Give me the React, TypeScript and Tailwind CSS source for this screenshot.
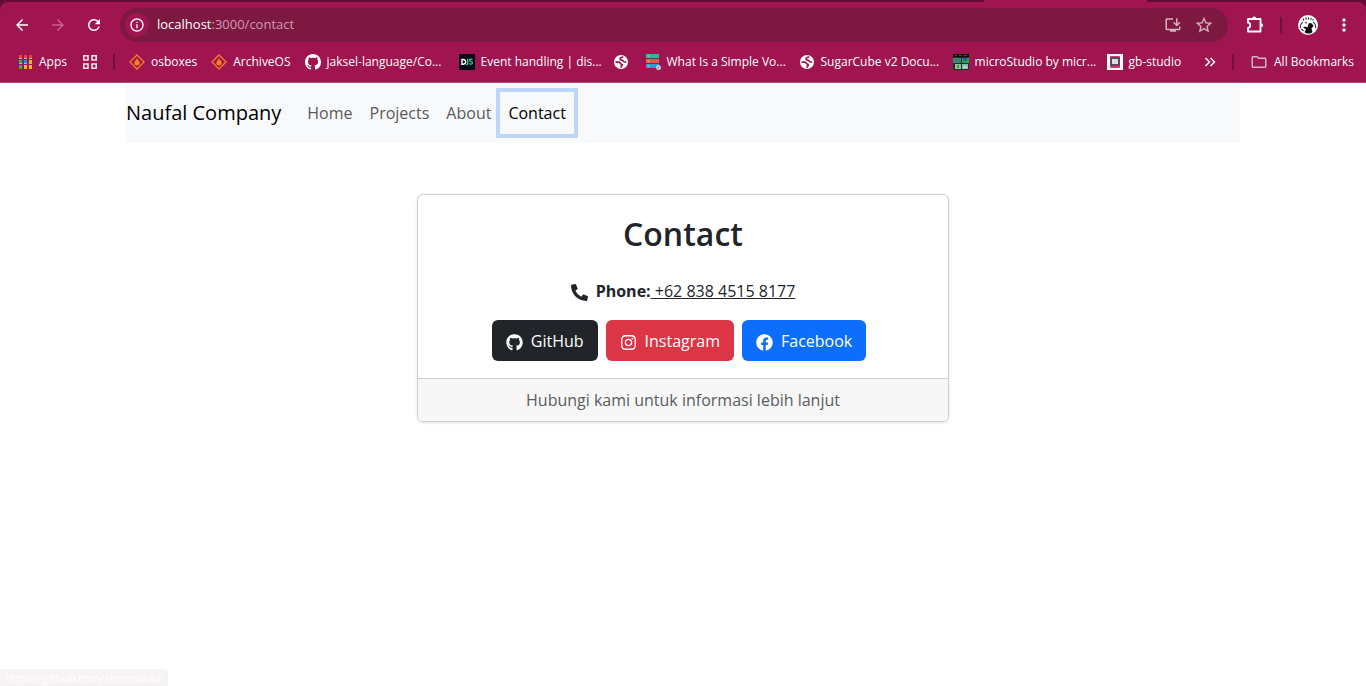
import type { ReactNode } from "react";
import { FaFacebook, FaGithub, FaInstagram, FaPhoneAlt } from "react-icons/fa";
import {
  MdArrowBack,
  MdArrowForward,
  MdInfoOutline,
  MdInstallDesktop,
  MdMoreVert,
  MdOutlineFolder,
  MdRefresh,
  MdStarBorder,
} from "react-icons/md";
import { BsGithub } from "react-icons/bs";

const appColors = [
  "#ea4335", "#ea4335", "#ea4335",
  "#34a853", "#1a8cff", "#fbbc04",
  "#34a853", "#fbbc04", "#fbbc04",
];

function AppsIcon() {
  return (
    <svg width="14" height="14" viewBox="0 0 14 14" aria-hidden="true">
      {appColors.map((c, i) => (
        <rect key={i} x={(i % 3) * 5} y={Math.floor(i / 3) * 5} width="3" height="4" fill={c} />
      ))}
      <path d="M0 3.500h3M5 3.500h3M10 3.500h3M0 8.500h3M5 8.500h3M10 8.500h3" stroke="#d9a3bc" />
    </svg>
  );
}

function GridIcon() {
  return (
    <svg width="14" height="14" viewBox="0 0 14 14" fill="none" stroke="#f6e3ec" strokeWidth="1.6" aria-hidden="true">
      <path d="M.8.8H5v4.200H.8zM9 .8h4.200V5H9zM.8 9H5v4.200H.8zM9 9h4.200v4.200H9z" />
    </svg>
  );
}

function DiamondIcon() {
  return (
    <svg width="16" height="16" viewBox="0 0 16 16" aria-hidden="true">
      <path d="M8 1 15 8 8 15 1 8z" fill="none" stroke="#f58220" strokeWidth="1.3" />
      <path d="M8 4c.3 1.700 2.700 2.600 2.700 4.800A2.700 2.700 0 0 1 8 11.500a2.700 2.700 0 0 1-2.700-2.700C5.300 7.300 7.600 6 8 4z" fill="#f58220" />
    </svg>
  );
}

function GlobeIcon() {
  return (
    <svg width="16" height="16" viewBox="0 0 16 16" aria-hidden="true">
      <circle cx="8" cy="8" r="7" fill="#fff" />
      <path d="M2.500 8.200h3.300c1.600 0 1.300 2.100 3 2.100.7 0 .6 1.700-.6 1.700v1.800" fill="none" stroke="#a0144f" strokeWidth="1.700" />
      <path d="M10.300 3.200C8.800 3 7 3.800 7 5c0 1.700 2.800.7 3.300 2.200.3.900 1.200.9 3 .9" fill="none" stroke="#a0144f" strokeWidth="1.700" />
    </svg>
  );
}

function DiscordJsIcon() {
  return (
    <svg width="16" height="16" viewBox="0 0 16 16" aria-hidden="true">
      <path d="M0 0h16v16H0z" fill="#090a16" />
      <path d="M3 5.500h1.300a2.200 2.200 0 0 1 0 4.700H3z" fill="none" stroke="#fff" strokeWidth="1.400" />
      <path d="M8.700 4.800v4.500c0 1-.8 1.400-1.900 1.200M13.500 5.600c-1-.7-3-.5-3 .8s3 .9 3 2.400-2.200 1.700-3.300.8" fill="none" stroke="#3fc58a" strokeWidth="1.300" />
    </svg>
  );
}

function ServerIcon() {
  return (
    <svg width="16" height="16" viewBox="0 0 16 16" aria-hidden="true">
      <path d="M1 0h13v4H1z" fill="#27b99a" />
      <path d="M2 4h11v1H2zM2 9h11v1H2z" fill="#34495e" />
      <path d="M1 5h13v4H1z" fill="#e2574c" />
      <path d="M1 10h13v4H1z" fill="#2d9cdb" />
      <path d="M2.500 1.500h2v1h-2zM2.500 6.500h2v1h-2zM2.500 11.500h2v1h-2z" fill="#f7d154" />
      <circle cx="13.500" cy="13.500" r="2.500" fill="#c9ced3" />
      <path d="m12.300 13.500 1 1 1.500-2" fill="none" stroke="#6b7680" strokeWidth=".8" />
    </svg>
  );
}

function MicroStudioIcon() {
  return (
    <svg width="16" height="16" viewBox="0 0 16 16" aria-hidden="true">
      <path d="M0 0h16v16H0z" fill="#1d3328" />
      <path d="M0 0h16v3H0z" fill="#101512" />
      <path d="M2 1h2v1H2zM6 1h3v1H6zM11 1h3v1h-3z" fill="#48503f" />
      <path d="M0 4h8v5H0z" fill="#3d8a55" />
      <path d="M1 5h3v2H1zM5 6h2v2H5z" fill="#3f6fae" />
      <path d="M9 4h7v5H9z" fill="#21a83f" />
      <path d="M10 4h4v3h-4z" fill="#2b62a8" />
      <path d="M2 10h6v5H2z" fill="#8cc2a0" />
      <path d="M4 11h2v3H4z" fill="#5b8c2f" />
      <path d="M9 10h6v5H9z" fill="#84b8c4" />
      <path d="M10 12h4v2h-4z" fill="#d3d08f" />
    </svg>
  );
}

function GbStudioIcon() {
  return (
    <svg width="16" height="16" viewBox="0 0 16 16" aria-hidden="true">
      <path d="M0 0h16v16H0z" fill="#fff" />
      <rect x="3" y="2" width="10" height="12" rx="1" fill="#d83268" />
      <rect x="3" y="3" width="10" height="9" rx="1" fill="#5b4a58" />
      <rect x="5" y="5" width="6" height="5" fill="#d9dde3" />
    </svg>
  );
}

function ExtensionIcon() {
  return (
    <svg width="18" height="18" viewBox="0 0 18 18" fill="none" stroke="#fff" strokeWidth="1.800" strokeLinejoin="round" aria-hidden="true">
      <path d="M2 3h12.500v12.500H2v-3.600c3-.3 3-4.900 0-5.200z" />
      <path d="M6.200 2.500a2 2 0 0 1 4 0zM15 7.300a2 2 0 0 1 0 4z" fill="#fff" stroke="none" />
    </svg>
  );
}

function AvatarIcon() {
  return (
    <svg width="20" height="20" viewBox="0 0 20 20" aria-hidden="true">
      <circle cx="10" cy="10" r="10" fill="#fff" />
      <path d="M5.500 3.500v2M8 2.500v2.200M10.500 2.500v2M13 2.700v2M15 4v1.500" stroke="#222" strokeWidth="1.100" />
      <path d="M5 7c-2 1-3 4-2.500 6M15 7c2 1 3 4 2.500 6M7 7.500l2 .5M3.500 14l2 2" fill="none" stroke="#333" strokeWidth="1.100" />
      <path d="M11 8l3 .5 1.500 2.500-2 2.500 1 3.500c-2 2-6 2-8 0l1.500-2.500L5 12.500l2-1 2.500.8z" fill="#111" />
    </svg>
  );
}

function MoreIcon() {
  return (
    <svg width="12" height="12" viewBox="0 0 12 12" fill="none" stroke="#fff" strokeWidth="1.500" aria-hidden="true">
      <path d="m1.500 2 4 4-4 4M6.500 2l4 4-4 4" />
    </svg>
  );
}

function Divider() {
  return <span className="h-4 w-0.5 shrink-0 bg-[#6f0f3b]" />;
}

function Bookmark({ icon, label, className = "" }: { icon: ReactNode; label: string; className?: string }) {
  return (
    <a
      href="#bookmark"
      aria-label={label || "Bookmark"}
      className={"flex shrink-0 items-center gap-1.5 whitespace-nowrap " + className}
    >
      {icon}
      {label && <span>{label}</span>}
    </a>
  );
}

function Browser() {
  return (
    <header className="bg-[#640c33] font-['Open_Sans',sans-serif] text-white">
      <div className="flex h-0.5 justify-end pr-[219px]">
        <span className="w-[163px] bg-[#a0144f]" />
      </div>
      <div className="rounded-t-lg border-b border-[#b94478] bg-[#a0144f]">
        <div className="flex items-center pt-1.5 pr-3">
          <div className="flex w-[120px] shrink-0 items-center gap-[18px] pl-[13px]">
            <button aria-label="Back"><MdArrowBack size={18} /></button>
            <button aria-label="Forward" className="text-[#c8608f]"><MdArrowForward size={18} /></button>
            <button aria-label="Reload"><MdRefresh size={18} /></button>
          </div>
          <div className="flex h-[34px] grow items-center gap-2 rounded-full bg-[#7d1841] pr-3.5 pl-[5px]">
            <button aria-label="Site information" className="flex size-6 items-center justify-center rounded-full bg-[#a0144f]">
              <MdInfoOutline size={16} />
            </button>
            <div className="grow text-[13px]">
              localhost<span className="text-[#cf9bb3]">:3000/contact</span>
            </div>
            <button aria-label="Install app" className="pr-1 text-[#d2b3c1]"><MdInstallDesktop size={18} /></button>
            <button aria-label="Bookmark page" className="text-[#d2b3c1]"><MdStarBorder size={20} /></button>
          </div>
          <div className="flex shrink-0 items-center gap-4 pl-[18px]">
            <button aria-label="Extensions"><ExtensionIcon /></button>
            <Divider />
            <button aria-label="Profile"><AvatarIcon /></button>
            <button aria-label="Menu"><MdMoreVert size={20} /></button>
          </div>
        </div>
        <nav aria-label="Bookmarks" className="flex h-10 items-center pr-3 pl-[19px] text-[12px]">
          <div className="mr-3.5 flex items-center gap-4">
            <Bookmark icon={<AppsIcon />} label="Apps" />
            <button aria-label="Tab groups"><GridIcon /></button>
            <Divider />
          </div>
          <Bookmark icon={<DiamondIcon />} label="osboxes" className="pr-3.5" />
          <Bookmark icon={<DiamondIcon />} label="ArchiveOS" className="pr-3.5" />
          <Bookmark icon={<BsGithub size={16} />} label="jaksel-language/Co..." className="w-[154px]" />
          <Bookmark icon={<DiscordJsIcon />} label="Event handling | dis..." className="w-[154px]" />
          <Bookmark icon={<GlobeIcon />} label="" className="pr-4" />
          <Bookmark icon={<ServerIcon />} label="What Is a Simple Vo..." className="w-[154px]" />
          <Bookmark icon={<GlobeIcon />} label="SugarCube v2 Docu..." className="w-[154px]" />
          <Bookmark icon={<MicroStudioIcon />} label="microStudio by micr..." className="w-[154px]" />
          <Bookmark icon={<GbStudioIcon />} label="gb-studio" />
          <div className="ml-auto flex items-center gap-4">
            <button aria-label="More bookmarks"><MoreIcon /></button>
            <Divider />
            <Bookmark icon={<MdOutlineFolder size={18} className="text-[#d2b3c1]" />} label="All Bookmarks" />
          </div>
        </nav>
      </div>
    </header>
  );
}

function SocialButton({ icon, label, color }: { icon: ReactNode; label: string; color: string }) {
  return (
    <a href={"#" + label.toLowerCase()} className={"flex h-[41px] items-center gap-2 rounded-md px-3.5 text-white " + color}>
      <span className="pt-1">{icon}</span>
      {label}
    </a>
  );
}

export default function App() {
  return (
    <div className="flex min-h-screen flex-col bg-white font-['Open_Sans',sans-serif] text-[16px] text-[#212529]">
      <Browser />
      <main className="mx-auto w-full max-w-[1114px] grow">
        <nav aria-label="Main" className="flex h-[60px] items-center gap-px bg-[#f8f9fa] text-[#595a5b]">
          <a href="#top" className="mr-[17px] text-[20px] text-black">Naufal Company</a>
          <a href="#home" className="px-2">Home</a>
          <a href="#projects" className="px-2">Projects</a>
          <a href="#about" className="px-2">About</a>
          <a href="#contact" aria-current="page" className="flex h-[42px] items-center px-2 text-black ring-4 ring-[#bdd7fb]">Contact</a>
        </nav>
        <section className="mx-auto mt-[51px] w-[532px] max-w-full overflow-hidden rounded-md border border-[#cfcfcf] text-center shadow-sm">
          <div className="px-4 pt-[18px] pb-[17px]">
            <h1 className="text-[32px] leading-[42px] font-semibold">Contact</h1>
            <p className="mt-[23px] flex items-center justify-center leading-[26px]">
              <FaPhoneAlt size={17} className="mt-0.5 mr-2" />
              <strong>Phone:</strong>
              <a href="tel:+6283845158177" className="whitespace-pre underline"> +62 838 4515 8177</a>
            </p>
            <div className="mt-4 flex justify-center gap-2 pr-2">
              <SocialButton icon={<FaGithub size={17} />} label="GitHub" color="bg-[#212529]" />
              <SocialButton icon={<FaInstagram size={17} />} label="Instagram" color="bg-[#dc3545]" />
              <SocialButton icon={<FaFacebook size={17} />} label="Facebook" color="bg-[#0d6efd]" />
            </div>
          </div>
          <footer className="border-t border-[#cfcfcf] bg-[#f7f7f7] py-2 leading-[26px] text-[#595c5f]">
            Hubungi kami untuk informasi lebih lanjut
          </footer>
        </section>
      </main>
      <div className="self-start rounded-tr bg-[#f7f3f5] px-[5px] text-[11px] leading-[17px] text-white">
        https://github.com/sternnaufal
      </div>
    </div>
  );
}
